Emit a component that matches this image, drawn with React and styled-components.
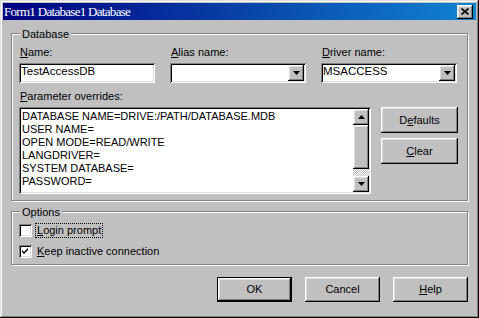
import React from 'react';
import styled, {createGlobalStyle} from 'styled-components';

const GlobalStyle = createGlobalStyle`
  html, body {
    margin: 0;
    padding: 0;
    background: #c0c0c0;
  }
  * {
    box-sizing: border-box;
  }
`

const raised = `
  background: #c0c0c0;
  box-shadow: inset -1px -1px #000, inset 1px 1px #fff, inset -2px -2px #808080, inset 2px 2px #dfdfdf;
`

const sunken = `
  background: #fff;
  box-shadow: inset 1px 1px #808080, inset -1px -1px #fff, inset 2px 2px #000, inset -2px -2px #dfdfdf;
`

const Window = styled.div`
  width: 479px;
  height: 318px;
  padding: 3px;
  background: #c0c0c0;
  box-shadow: inset -1px -1px #000, inset 1px 1px #dfdfdf, inset -2px -2px #808080, inset 2px 2px #fff;
  display: flex;
  flex-direction: column;
  font: 11px/13px "Liberation Sans", Arial, sans-serif;
  color: #000;
`

const TitleBar = styled.div`
  height: 17px;
  padding: 0 3px 0 1px;
  display: flex;
  align-items: center;
  justify-content: space-between;
  background: linear-gradient(90deg, #000080, #1084d0);
`

const Title = styled.span`
  color: #fff;
  font: 13px/17px "Liberation Serif", "Times New Roman", serif;
  letter-spacing: -0.7px;
`

const CloseButton = styled.div`
  ${raised};
  width: 16px;
  height: 14px;
  display: flex;
  align-items: center;
  justify-content: center;
`

const Body = styled.div`
  flex: 1;
  padding: 13px 8px 0 8px;
  display: flex;
  flex-direction: column;
`

const Group = styled.div`
  position: relative;
  border: 1px solid #808080;
  box-shadow: inset 1px 1px #fff, 1px 1px #fff;
  padding: ${p => p.$pad};
  margin-top: ${p => p.$mt || 0}px;
`

const Legend = styled.span`
  position: absolute;
  top: -6px;
  left: 8px;
  padding: 0 2px;
  background: #c0c0c0;
`

const FieldGrid = styled.div`
  display: grid;
  grid-template-columns: 136px 136px 136px;
  column-gap: 15px;
`

const Field = styled.div`
  display: flex;
  flex-direction: column;
  gap: 4px;
`

const Label = styled.span`
  padding-left: 1px;
  white-space: nowrap;
`

const Input = styled.div`
  ${sunken};
  height: 20px;
  padding: 0 2px;
  display: flex;
  justify-content: space-between;
  align-items: flex-start;
`

const InputText = styled.span`
  padding-top: 2px;
  font-size: 11.5px;
`

const DropButton = styled.div`
  ${raised};
  width: 16px;
  height: 16px;
  margin: 2px 0 0 0;
  display: flex;
  align-items: center;
  justify-content: center;
`

const ParamRow = styled.div`
  display: flex;
  gap: 10px;
  margin-top: 7px;
`

const ParamBox = styled.div`
  ${sunken};
  width: 352px;
  height: 87px;
  padding: 2px;
  display: flex;
`

const ParamText = styled.div`
  flex: 1;
  padding: 1px 0 0 1px;
  white-space: pre;
`

const ScrollBar = styled.div`
  width: 16px;
  display: flex;
  flex-direction: column;
`

const ScrollArrow = styled.div`
  ${raised};
  height: 16px;
  display: flex;
  align-items: center;
  justify-content: center;
`

const Thumb = styled.div`
  ${raised};
  height: 44px;
`

const Track = styled.div`
  flex: 1;
  background: repeating-conic-gradient(#c0c0c0 0 25%, #fff 0 50%) 0 0 / 2px 2px;
`

const SideButtons = styled.div`
  display: flex;
  flex-direction: column;
  gap: 5px;
  padding-top: 17px;
`

const Button = styled.div`
  ${raised};
  width: ${p => p.$w}px;
  height: ${p => p.$h}px;
  display: flex;
  align-items: center;
  justify-content: center;
  ${p => p.$default && `
    border: 1px solid #000;
  `}
`

const CheckRow = styled.div`
  display: flex;
  align-items: center;
  gap: 4px;
  height: 13px;
  & + & {
    margin-top: 8px;
  }
`

const CheckBox = styled.div`
  ${sunken};
  width: 13px;
  height: 13px;
  display: flex;
  align-items: center;
  justify-content: center;
`

const CheckLabel = styled.span`
  padding: 0 1px;
  outline: ${p => (p.$focus ? '1px dotted #000' : 'none')};
`

const Footer = styled.div`
  display: flex;
  justify-content: flex-end;
  gap: 13px;
  margin-top: 12px;
`

const Arrow = ({up}) => (
  <svg width="7" height="4" viewBox="0 0 7 4">
    <polygon points={up ? '3.5,0 7,4 0,4' : '0,0 7,0 3.5,4'} fill="#000" />
  </svg>
)

const Combo = ({value}) => (
  <Input>
    <InputText>{value}</InputText>
    <DropButton><Arrow /></DropButton>
  </Input>
)

const params = [
  'DATABASE NAME=DRIVE:/PATH/DATABASE.MDB',
  'USER NAME=',
  'OPEN MODE=READ/WRITE',
  'LANGDRIVER=',
  'SYSTEM DATABASE=',
  'PASSWORD=',
]

const App = () => {
  return (
    <Window>
      <GlobalStyle />
      <TitleBar>
        <Title>Form1 Database1 Database</Title>
        <CloseButton>
          <svg width="8" height="7" viewBox="0 0 8 7">
            <path d="M0.5 0.5 L7.5 6.5 M7.5 0.5 L0.5 6.5" stroke="#000" strokeWidth="1.6" />
          </svg>
        </CloseButton>
      </TitleBar>
      <Body>
        <Group $pad="12px 9px 6px 7px">
          <Legend>Database</Legend>
          <FieldGrid>
            <Field>
              <Label><u>N</u>ame:</Label>
              <Input><InputText>TestAccessDB</InputText></Input>
            </Field>
            <Field>
              <Label><u>A</u>lias name:</Label>
              <Combo value="" />
            </Field>
            <Field>
              <Label><u>D</u>river name:</Label>
              <Combo value="MSACCESS" />
            </Field>
          </FieldGrid>
          <ParamRow>
            <Field>
              <Label><u>P</u>arameter overrides:</Label>
              <ParamBox>
                <ParamText>{params.join('\n')}</ParamText>
                <ScrollBar>
                  <ScrollArrow><Arrow up /></ScrollArrow>
                  <Thumb />
                  <Track />
                  <ScrollArrow><Arrow /></ScrollArrow>
                </ScrollBar>
              </ParamBox>
            </Field>
            <SideButtons>
              <Button $w={77} $h={26}><span>D<u>e</u>faults</span></Button>
              <Button $w={77} $h={26}><span><u>C</u>lear</span></Button>
            </SideButtons>
          </ParamRow>
        </Group>
        <Group $pad="12px 9px 6px 7px" $mt={10}>
          <Legend>Options</Legend>
          <CheckRow>
            <CheckBox />
            <CheckLabel $focus><u>L</u>ogin prompt</CheckLabel>
          </CheckRow>
          <CheckRow>
            <CheckBox>
              <svg width="7" height="7" viewBox="0 0 7 7">
                <path d="M0 2 L2 4 L6 0 L6 2 L2 6 L0 4 Z" fill="#000" />
              </svg>
            </CheckBox>
            <CheckLabel><u>K</u>eep inactive connection</CheckLabel>
          </CheckRow>
        </Group>
        <Footer>
          <Button $w={75} $h={25} $default>OK</Button>
          <Button $w={75} $h={25}>Cancel</Button>
          <Button $w={75} $h={25}><span><u>H</u>elp</span></Button>
        </Footer>
      </Body>
    </Window>
  );
};

export default App;
